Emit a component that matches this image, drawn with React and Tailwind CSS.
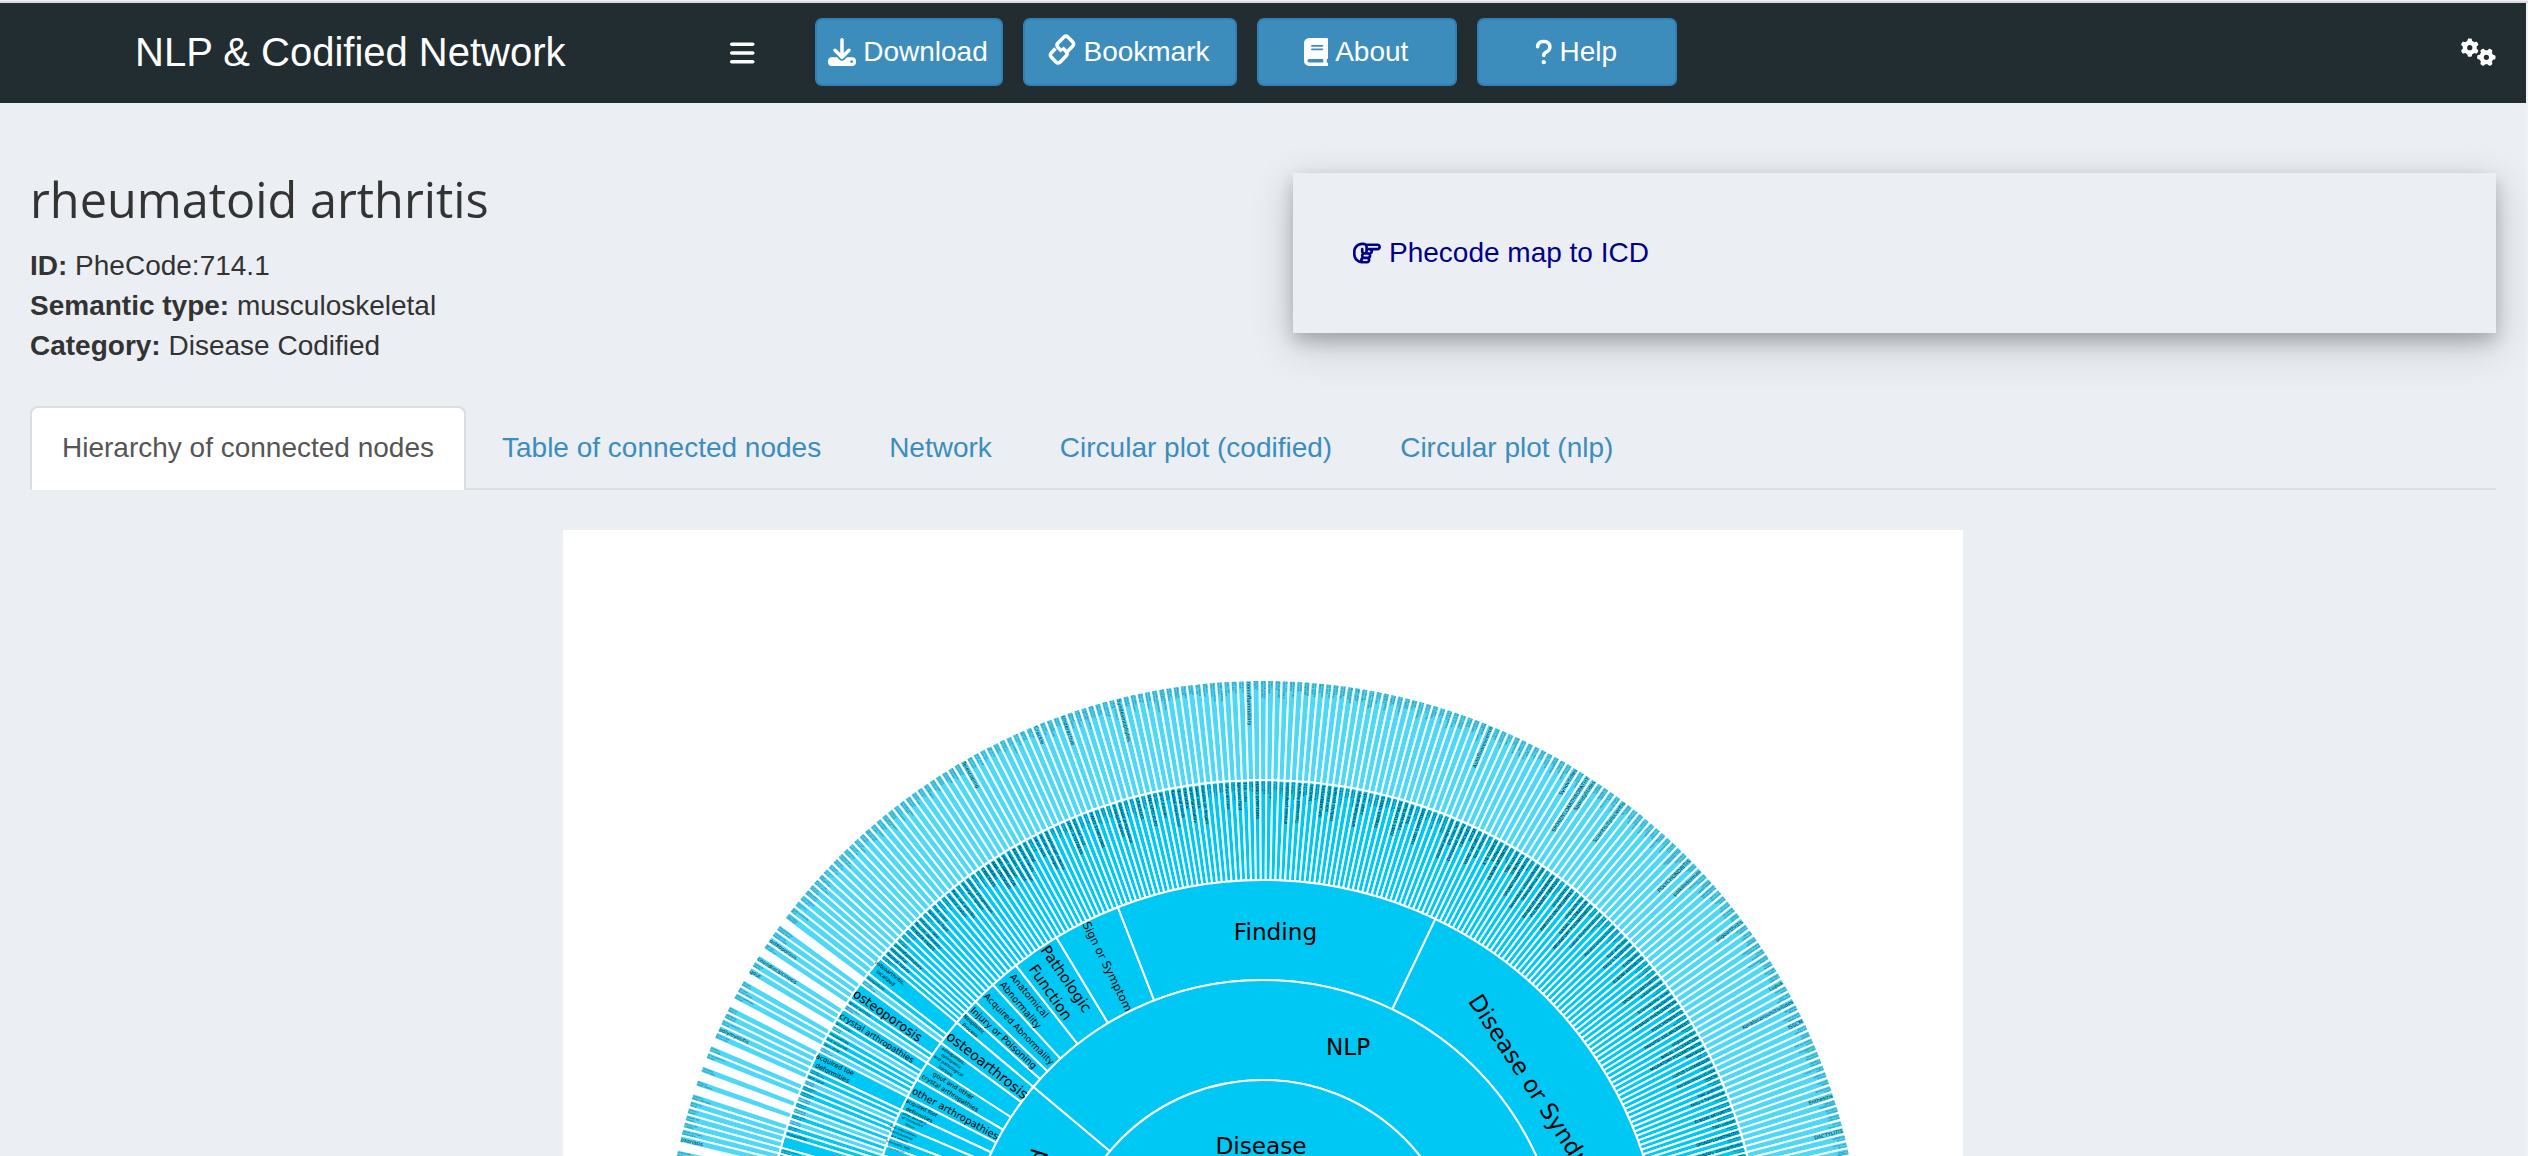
import React from "react";
import { FaBars, FaBook, FaDownload, FaGears, FaQuestion, FaRegHandPointRight } from "react-icons/fa6";

const CX = 700;
const CY = 750;
const FILL = "#00c8f4";
const LEAF = "#4dd8f8";

const pt = (r, deg) => {
  const a = (deg * Math.PI) / 180;
  return [(CX + r * Math.sin(a)).toFixed(2), (CY - r * Math.cos(a)).toFixed(2)];
};

function Sector({ r0, r1, a0, a1, fill = FILL }) {
  const large = a1 - a0 > 180 ? 1 : 0;
  const [x0, y0] = pt(r1, a0);
  const [x1, y1] = pt(r1, a1);
  const [x2, y2] = pt(r0, a1);
  const [x3, y3] = pt(r0, a0);
  return (
    <path
      d={`M${x0} ${y0}A${r1} ${r1} 0 ${large} 1 ${x1} ${y1}L${x2} ${y2}A${r0} ${r0} 0 ${large} 0 ${x3} ${y3}Z`}
      fill={fill}
      stroke="#fff"
      strokeWidth="2"
    />
  );
}

// [start angle, end angle, number of leaves]
const NLP_GROUPS = [
  [-49.96, -47.96, 3],
  [-47.96, -45.93, 3],
  [-45.93, -42.45, 5],
  [-42.45, -38.15, 6],
  [-38.15, -31.1, 10],
  [-31.1, -21.27, 14],
  [-21.27, 25.53, 67],
  [25.53, 79.4, 77],
];

const CODIFIED_GROUPS = [
  [-53.65, -49.96],
  [-57.15, -53.65],
  [-59.95, -57.15],
  [-62.75, -59.95],
  [-64.85, -62.75],
  [-66.95, -64.85],
  [-69.05, -66.95],
  [-70.45, -69.05],
  [-71.85, -70.45],
  [-77.45, -71.85],
];

// Second-level codified nodes from the top down: width in leaves, and whether they have children
const CODIFIED_NODES = [
  [3, 1], [1, 1], [1, 0],
  [3, 1], [1, 1], [1, 0],
  [2, 1], [1, 1], [1, 0],
  [1, 1], [1, 1], [1, 1], [1, 0],
  [3, 1],
  [1, 1], [1, 1], [1, 0],
  [1, 1], [1, 1], [1, 0],
  [1, 1], [1, 0],
  [1, 1], [1, 0],
  [1, 1], [1, 1], [2, 1], [1, 1], [1, 1], [1, 1], [1, 0],
  [1, 1], [1, 1], [1, 1],
];

const codAngle = (k) => (k <= 5 ? -49.96 - (k * 3.69) / 5 : -53.65 - (k - 5) * 0.7);

const WORDS = [
  "nodules present", "Karma expression", "Normal hands", "interstitial", "antiinflammatory", "swan neck", "nodules on fingers",
  "morphologic edema", "TENDER KNEES", "flexion deformity", "infusion rate", "JOINT STIFFNESS", "synovial fluid", "Tick color",
  "LESIONS", "HAND SYMPTOMS", "control status", "Rule out arthritis", "physical exam", "enlarged spleen", "disease progression",
  "Effusion left", "Decreased hearing", "CRACKLES", "Nodules", "ANA SPECKLED", "INFLAMMATION", "joint erosion",
];
const NLP_WORDS_RIGHT = [
  "TNFi cohort", "SYNOVITIS", "SPONDYLOARTHRITIS", "autoimmune", "Secondary osteoarthritis", "Scleroderma renal", "Episcleritis",
  "RAYNAUD PHENOMENON", "PULMONARY FIBROSIS", "POLYCHONDRITIS", "polyarthritis", "PAROTID ENLARGEMENT", "Other rheumatic", "oligoarthritis",
  "NASAL ULCERATION", "MIGRATORY POLYARTHRITIS", "Mastalgia", "Lupus Erythematosus", "LUPUS CUTANEOUS", "Lupus", "Keratoconjunctivitis",
  "ISSCM", "HAND ARTHRITIS", "foot arthritis", "Felty's Syndrome", "EYE CHANGE", "Enthesitis", "ELBOW ARTHRITIS", "DISCOID LUPUS",
];

const FEATURED = [
  [-30, "Telescoping"], [-22.4, "Crackle"], [-19.6, "Underactive"], [-14, "Syndesmophytes"], [-1.4, "noninflammatory"],
  [22.5, "Autofluorescence"], [31.5, "Synovitides"], [32.9, "SPONDYLOARTHROPATHY"], [33.6, "Spondylitides"],
  [37.15, "Scleritis/Episcleritis"], [45.4, "POLYCHONDRITIS"], [47, "poikilodermas"], [53.2, "oligoarthritis"], [60.1, "Lupus"],
  [62.1, "Keratoconjunctivitides"], [64.2, "ISSCM"], [71.9, "Enthesitis"], [75.3, "DACTYLITIS"],
  [-55.4, "osteoporosis"], [-57.5, "chondrocalcinosis"], [-59, "gout"], [-65.1, "polymyositis"], [-76.4, "psoriasis"],
];

const hash = (n) => {
  const s = Math.sin(n * 127.1 + 11.7) * 43758.5453;
  return s - Math.floor(s);
};

function LeafText({ r, a, text, size, shift = 0, opacity = 1 }) {
  const left = a < 0;
  const [x, y] = pt(r, a);
  return (
    <text
      transform={`translate(${x} ${y}) rotate(${(left ? 90 + a : a - 90).toFixed(2)})`}
      y={size * 0.36 + shift}
      fontSize={size}
      textAnchor={left ? "start" : "end"}
      opacity={opacity}
    >
      {text}
    </text>
  );
}

function TinyPair({ r, a, seed, opacity }) {
  const i = Math.floor(hash(seed) * WORDS.length);
  const j = Math.floor(hash(seed + 500) * WORDS.length);
  const long = hash(seed + 900) > 0.8;
  return (
    <>
      <LeafText r={r} a={a} size={2.2} shift={-1.2} opacity={opacity} text={long ? WORDS[i] : WORDS[i].slice(0, 9)} />
      <LeafText r={r} a={a} size={2.2} shift={1.2} opacity={opacity} text={WORDS[j].slice(0, 6 + Math.floor(hash(seed + 70) * 10))} />
    </>
  );
}

// [text, x, y, rotation, font size]
const LABELS = [
  ["Sign or Symptom", 544, 436.7, 63.8, 11.4],
  ["Pathologic", 502.7, 449.3, 55.4, 15],
  ["Function", 487, 462.7, 55.4, 15],
  ["Anatomical", 466, 466, 49.7, 9.6],
  ["Abnormality", 457.3, 475.3, 49.7, 9.6],
  ["Acquired Abnormality", 455.7, 499.3, 45.8, 8.9],
  ["Injury or Poisoning", 440.3, 508.3, 42.5, 9.3],
  ["Neoplastic", 411, 494.3, 41, 5],
  ["Process", 407, 500.3, 41, 5],
  ["osteoarthrosis", 424, 535.7, 38.2, 14],
  ["osteoporosis,", 390.5, 526, 34.7, 4.2],
  ["osteopenia", 388, 531, 34.7, 4.2],
  ["and pathological", 385.5, 536, 34.7, 4.2],
  ["fracture", 382.5, 541, 34.7, 4.2],
  ["gout and other", 390.3, 556, 31.5, 6.3],
  ["crystal arthropathies", 387, 563.3, 31.5, 6.3],
  ["other arthropathies", 392.3, 584, 28.7, 10],
  ["acquired foot", 358.7, 578.3, 26.3, 5.2],
  ["deformities", 356.3, 585, 26.3, 5.2],
  ["other disorders", 351.5, 588.5, 24, 3.4],
  ["of connective", 349.5, 592, 24, 3.4],
  ["tissue", 347, 596, 24, 3.4],
  ["other inflammatory", 340, 601, 22, 3],
  ["spondylopathies", 338.5, 605, 22, 3],
  ["and arthritis", 336.5, 609, 22, 3],
  ["arthropathy NOS", 335, 615, 20, 3],
  ["rheumatism", 333, 620, 19, 3],
  ["osteoporosis", 324.3, 486, 35, 12.8],
  ["osteoarthritis,", 327, 443, 38.2, 5.2],
  ["localized", 322.5, 448, 38.2, 5.2],
  ["crystal arthropathies", 313.7, 508.3, 32, 8.3],
  ["acquired toe", 272, 535, 26, 6.6],
  ["deformities", 269.3, 543.3, 26, 6.6],
];

function Sunburst() {
  const outer = [];
  const labels = [];
  let n = 0;
  const outerLeaf = (a0, a1, key) => {
    const mid = (a0 + a1) / 2;
    outer.push(<Sector key={`o${key}`} r0={500} r1={600} a0={a0} a1={a1} fill={LEAF} />);
    const hit = FEATURED.find((f) => Math.abs(f[0] - mid) <= 0.351);
    if (hit) labels.push(<LeafText key={`ot${key}`} r={598.5} a={mid} size={5.1} text={hit[1]} opacity={0.85} />);
    else labels.push(<TinyPair key={`ot${key}`} r={599} a={mid} seed={key + 31} opacity={0.68} />);
  };

  NLP_GROUPS.forEach(([g0, g1, count]) => {
    const step = (g1 - g0) / count;
    for (let i = 0; i < count; i++) {
      const a0 = g0 + i * step;
      const a1 = a0 + step;
      const mid = (a0 + a1) / 2;
      n += 1;
      outer.push(<Sector key={`m${n}`} r0={400} r1={500} a0={a0} a1={a1} />);
      if (hash(n * 3 + 2) > 0.42) {
        const list = mid > 25 ? NLP_WORDS_RIGHT : WORDS;
        labels.push(<LeafText key={`mt${n}`} r={498} a={mid} size={4.2} text={list[n % list.length]} opacity={0.95} />);
      } else labels.push(<TinyPair key={`mt${n}`} r={498} a={mid} seed={n} opacity={0.8} />);
      outerLeaf(a0, a1, n);
    }
  });

  let k = 0;
  CODIFIED_NODES.forEach(([width, children], idx) => {
    const a1 = codAngle(k);
    const a0 = codAngle(k + width);
    outer.push(<Sector key={`c${idx}`} r0={400} r1={500} a0={a0} a1={a1} fill={children ? FILL : LEAF} />);
    if (width === 1) {
      labels.push(
        hash(idx + 3) > 0.6 && children ? (
          <LeafText key={`ct${idx}`} r={498} a={(a0 + a1) / 2} size={3.6} text={["gouty arthritis", "myopathies", "toe acquired", "skin ulcer"][idx % 4]} opacity={0.85} />
        ) : (
          <TinyPair key={`ct${idx}`} r={498} a={(a0 + a1) / 2} seed={idx + 40} opacity={0.7} />
        )
      );
    }
    if (children) for (let i = 0; i < width; i++) outerLeaf(codAngle(k + i + 1), codAngle(k + i), 400 + k + i);
    k += width;
  });

  return (
    <svg width="1400" height="626" viewBox="0 0 1400 626" className="block [font-family:'DejaVu_Sans',Verdana,sans-serif]">
      {outer}
      {NLP_GROUPS.map(([a0, a1]) => (
        <Sector key={a0} r0={300} r1={400} a0={a0} a1={a1} />
      ))}
      {CODIFIED_GROUPS.map(([a0, a1]) => (
        <Sector key={a0} r0={300} r1={400} a0={a0} a1={a1} />
      ))}
      <Sector r0={200} r1={300} a0={-49.96} a1={264.8} />
      <Sector r0={200} r1={300} a0={-95.2} a1={-49.96} />
      <circle cx={CX} cy={CY} r="200" fill={FILL} stroke="#fff" strokeWidth="2" />
      {labels}
      {LABELS.map(([text, x, y, rot, size]) => (
        <text key={`${text}${x}`} transform={`translate(${x} ${y}) rotate(${rot})`} y={size * 0.3} fontSize={size} textAnchor="middle">
          {text}
        </text>
      ))}
      <g fontSize="23.2">
        <text x="712.5" y="410" textAnchor="middle">Finding</text>
        <text x="785" y="525" textAnchor="middle">NLP</text>
        <text x="698" y="624" textAnchor="middle">Disease</text>
        <text transform="translate(904.5 471) rotate(56.8)">Disease or Syndrome</text>
        <text transform="translate(463 665) rotate(-73)" y="9" textAnchor="middle">Codified</text>
      </g>
    </svg>
  );
}

function LinkIcon() {
  return (
    <svg width="28" height="32" viewBox="0 0 28 32" fill="none" stroke="#fff" strokeWidth="3.5" strokeLinejoin="round" strokeLinecap="butt" className="relative -top-[2px]">
      <path d="M7.5 14.5 L3.2 19 Q1.6 21 3.2 23 L8.2 28.2 Q10 29.8 12 28.2 L18.3 21.8 Q20 19.8 18.3 17.8 L14.4 13.6" />
      <path d="M19.5 17.5 L24.8 12 Q26.4 10 24.8 8 L19.8 2.9 Q18 1.3 16 2.9 L9.8 9.2 Q8.2 11.2 9.8 13.2 L13.8 17.4" />
    </svg>
  );
}

function HeaderButton({ className, icon, children }) {
  return (
    <button className={`flex h-[68px] items-center justify-center gap-[7px] rounded-[7px] border-2 border-[#2f80b5] bg-[#3c8dbc] pr-[2px] text-[28px] text-white ${className}`}>
      {icon}
      <span>{children}</span>
    </button>
  );
}

const TABS = ["Table of connected nodes", "Network", "Circular plot (codified)", "Circular plot (nlp)"];

export default function App() {
  return (
    <div className="h-[1156px] w-[2528px] overflow-hidden bg-[#f0f1f3] [font-family:'Liberation_Sans',Arial,sans-serif] text-[28px] text-[#333]">
      <div className="mt-px h-[2px] bg-[#d9dce0]" />
      <div className="h-[1153px] w-[2526px] bg-[#ebeff4]">
        <header className="flex h-[100px] items-center bg-[#222d32] pb-[2px] text-white">
          <h1 className="w-[730px] pl-[135px] text-[40px] leading-none">NLP &amp; Codified Network</h1>
          <FaBars className="mt-[1px] h-7 w-[24.5px]" />
          <nav className="ml-[60.5px] flex gap-5">
            <HeaderButton className="w-[188px]" icon={<FaDownload className="size-7" />}>Download</HeaderButton>
            <HeaderButton className="w-[214px]" icon={<LinkIcon />}>Bookmark</HeaderButton>
            <HeaderButton className="w-[200px]" icon={<FaBook className="h-7 w-[24.5px]" />}>About</HeaderButton>
            <HeaderButton className="w-[200px]" icon={<FaQuestion className="h-7 w-[17.5px]" />}>Help</HeaderButton>
          </nav>
          <FaGears className="mr-[30px] ml-auto h-7 w-[35px]" />
        </header>

        <main className="px-[30px] pt-[70px]">
          <div className="flex h-[233px] justify-between">
            <section>
              <h2 className="h-[73px] [font-family:'Open_Sans','Segoe_UI',sans-serif] text-[48.6px] leading-[52px]">rheumatoid arthritis</h2>
              <div className="leading-10">
                <p><b>ID:</b> PheCode:714.1</p>
                <p><b>Semantic type:</b> musculoskeletal</p>
                <p><b>Category:</b> Disease Codified</p>
              </div>
            </section>
            <section className="flex h-40 w-[1203px] items-center bg-[#ebeff4] pl-[60px] shadow-[0_8px_16px_rgba(0,0,0,0.2),0_12px_40px_rgba(0,0,0,0.19)]">
              <a className="flex items-center gap-2 text-[#00008b]">
                <FaRegHandPointRight className="size-7" />
                Phecode map to ICD
              </a>
            </section>
          </div>

          <div className="flex h-[84px] gap-1 border-b-2 border-[#ddd]">
            <div className="-mb-[2px] flex h-[84px] w-[436px] items-center rounded-t-lg border-2 border-b-0 border-[#ddd] bg-white pb-[2px] pl-[30px] text-[#555]">
              Hierarchy of connected nodes
            </div>
            {TABS.map((tab) => (
              <div key={tab} className="flex h-[84px] items-center px-8 text-[#3c8dbc]">{tab}</div>
            ))}
          </div>

          <div className="mt-10 ml-[533px] h-[626px] w-[1400px] bg-white">
            <Sunburst />
          </div>
        </main>
      </div>
    </div>
  );
}
